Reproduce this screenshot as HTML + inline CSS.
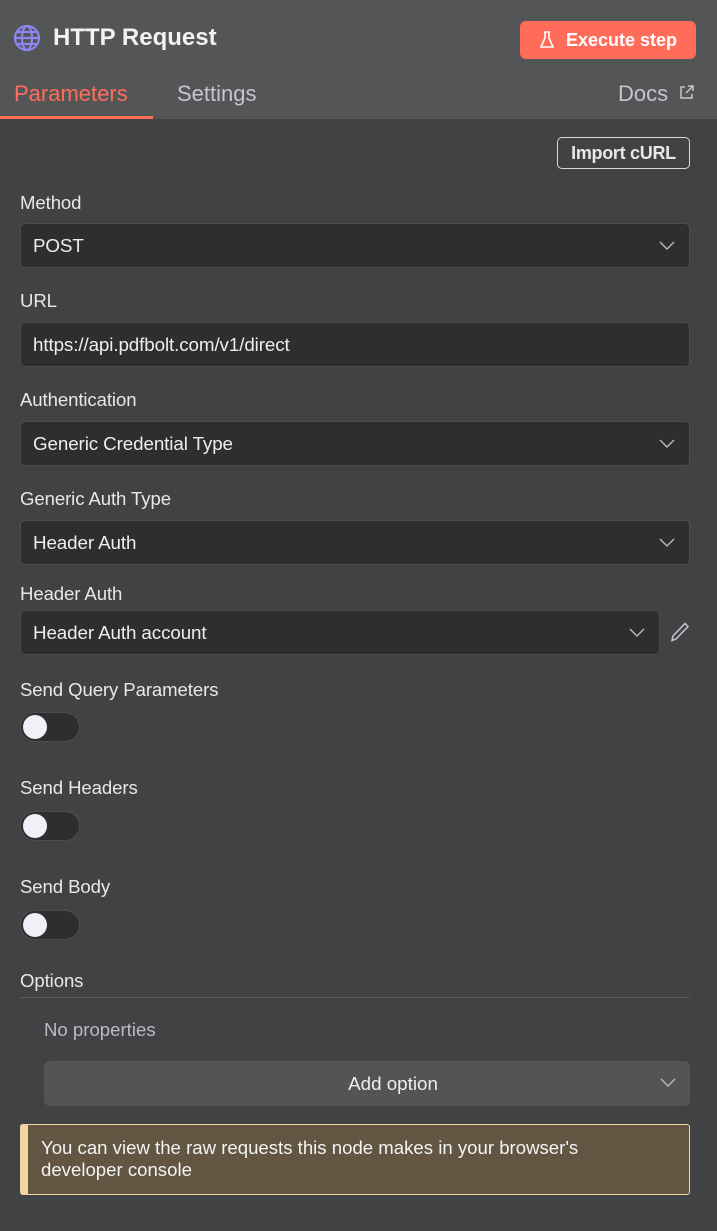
<!DOCTYPE html>
<html><head><meta charset="utf-8"><style>
*{box-sizing:border-box;margin:0;padding:0}
body{width:717px;height:1231px;background:#414244;font-family:"Liberation Sans",sans-serif;color:#e8e8ea;position:relative;overflow:hidden}
.a{position:absolute}
.hdr{left:0;top:0;width:717px;height:119px;background:#545557}
.lbl{left:20px;font-size:18.6px;color:#e8e8ea;letter-spacing:-0.1px}
.sel{left:20px;width:670px;height:45px;background:#2d2e2e;border:1px solid #4c4d4f;border-radius:5px;font-size:18.8px;padding-left:12px;line-height:43px;color:#eee;letter-spacing:-0.1px}
.chev{position:absolute;right:14px;top:17px}
.tog{left:20px;width:60px;height:30px;background:#2d2e2e;border:1px solid #4c4d4f;border-radius:15px}
.tog:after{content:"";position:absolute;left:2px;top:2px;width:24px;height:24px;border-radius:50%;background:#f0f0f8}
</style></head><body>
<div class="a hdr"></div>
<svg class="a" style="left:13px;top:24px" width="28" height="28" viewBox="0 0 28 28" fill="none" stroke="#8d85f0" stroke-width="2.2"><circle cx="14" cy="14" r="12"/><ellipse cx="14" cy="14" rx="5" ry="12"/><path d="M2 14h24M4 8h20M4 20h20"/></svg>
<div class="a" style="left:53px;top:24px;font-size:24px;font-weight:bold;color:#f2f2f2">HTTP Request</div>
<div class="a" style="left:520px;top:21px;width:176px;height:38px;background:#ff6d5a;border-radius:6px;color:#fff;font-size:18px;font-weight:bold;line-height:38px;padding-left:46px">Execute step</div>
<svg class="a" style="left:539px;top:31px" width="16" height="18" viewBox="0 0 16 18" fill="none" stroke="#fff" stroke-width="1.6"><path d="M5 1h6M6 1v6L2 16h12L10 7V1"/></svg>
<div class="a" style="left:14px;top:81px;font-size:22px;color:#ff6d5a">Parameters</div>
<div class="a" style="left:0;top:116px;width:153px;height:3px;background:#ff6d5a"></div>
<div class="a" style="left:177px;top:81px;font-size:22px;color:#c4c6cc">Settings</div>
<div class="a" style="left:618px;top:81px;font-size:22px;color:#c4c6cc">Docs</div>
<svg class="a" style="left:679px;top:85px" width="15" height="15" viewBox="0 0 15 15" fill="none" stroke="#c4c6cc" stroke-width="1.5"><path d="M6 2H2v11h11V9M9 1h5v5M14 1L7 8"/></svg>
<div class="a" style="left:557px;top:137px;width:133px;height:32px;border:1px solid #d8d8dc;border-radius:5px;font-size:18px;font-weight:bold;text-align:center;line-height:30px;letter-spacing:-0.3px">Import cURL</div>

<div class="a lbl" style="top:192px">Method</div>
<div class="a sel" style="top:223px">POST<svg class="chev" width="16" height="10" viewBox="0 0 16 10" fill="none" stroke="#bbb" stroke-width="1.4"><path d="M1 1l7 7 7-7"/></svg></div>
<div class="a lbl" style="top:290px">URL</div>
<div class="a sel" style="top:322px">https://api.pdfbolt.com/v1/direct</div>
<div class="a lbl" style="top:389px">Authentication</div>
<div class="a sel" style="top:421px">Generic Credential Type<svg class="chev" width="16" height="10" viewBox="0 0 16 10" fill="none" stroke="#bbb" stroke-width="1.4"><path d="M1 1l7 7 7-7"/></svg></div>
<div class="a lbl" style="top:488px">Generic Auth Type</div>
<div class="a sel" style="top:520px">Header Auth<svg class="chev" width="16" height="10" viewBox="0 0 16 10" fill="none" stroke="#bbb" stroke-width="1.4"><path d="M1 1l7 7 7-7"/></svg></div>
<div class="a lbl" style="top:583px">Header Auth</div>
<div class="a sel" style="top:610px;width:640px">Header Auth account<svg class="chev" width="16" height="10" viewBox="0 0 16 10" fill="none" stroke="#bbb" stroke-width="1.4"><path d="M1 1l7 7 7-7"/></svg></div>
<svg class="a" style="left:670px;top:622px" width="20" height="20" viewBox="0 0 20 20" fill="none" stroke="#c4c6cc" stroke-width="1.5"><path d="M15 1.5l3 3L6 17l-4 1.5 1-4.5z"/></svg>
<div class="a lbl" style="top:679px">Send Query Parameters</div>
<div class="a tog" style="top:712px"></div>
<div class="a lbl" style="top:777px">Send Headers</div>
<div class="a tog" style="top:811px"></div>
<div class="a lbl" style="top:876px">Send Body</div>
<div class="a tog" style="top:910px"></div>
<div class="a lbl" style="top:970px">Options</div>
<div class="a" style="left:20px;top:997px;width:670px;height:1px;background:#58595b"></div>
<div class="a" style="left:44px;top:1019px;font-size:18.6px;color:#b9bcc2">No properties</div>
<div class="a" style="left:44px;top:1061px;width:646px;height:45px;background:#535456;border-radius:6px;font-size:18.8px;text-align:center;line-height:45px;color:#eee;padding-left:52px">Add option<svg class="chev" width="16" height="10" viewBox="0 0 16 10" fill="none" stroke="#bbb" stroke-width="1.4"><path d="M1 1l7 7 7-7"/></svg></div>
<div class="a" style="left:20px;top:1124px;width:670px;height:71px;background:#625642;border:1px solid #f2d6a0;border-left:8px solid #f2d6a0;border-radius:3px;padding:12px 60px 0 13px;font-size:18.6px;line-height:22px;color:#f4f4f4">You can view the raw requests this node makes in your browser's developer console</div>
</body></html>
